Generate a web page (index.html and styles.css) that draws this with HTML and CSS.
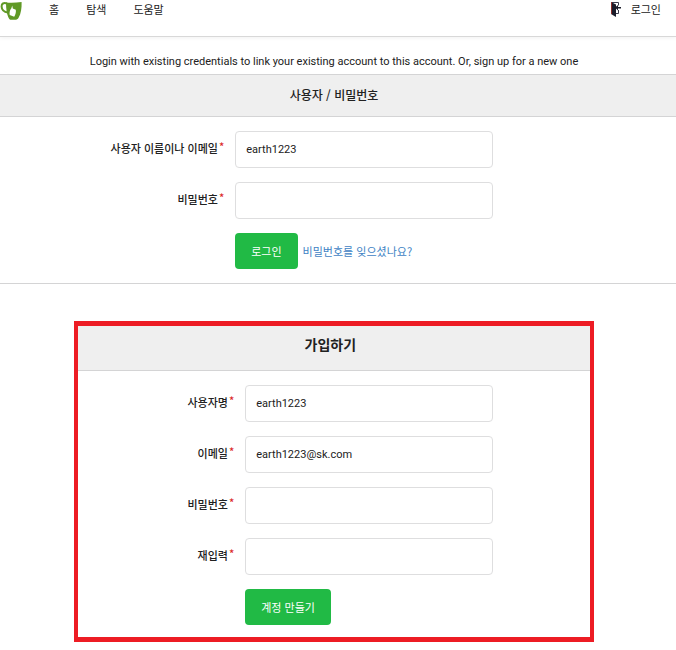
FILE: index.html
```
<!DOCTYPE html>
<html lang="ko">
<head>
    <meta charset="UTF-8">
    <meta name="viewport" content="width=device-width, initial-scale=1.0">
    <title>계정 연결 - Gitea</title>
    <link rel="stylesheet" href="styles.css">
</head>
<body>
    <header class="navbar">
        <nav class="nav-left">
            <a class="logo" href="#" aria-label="Gitea">
                <svg width="22" height="20" viewBox="0 0 22 20">
                    <path d="M7 2.500C3.500 1.500 1.500 2.500 1.600 5.500 1.700 8.800 4 11 8 11.500" fill="none" stroke="#609926" stroke-width="2"/>
                    <path d="M6 1.500C11 2 16 1.800 21.600 1 21.800 7 21 12.600 18.600 16.800 17.800 18.200 16.600 18.800 15 18.800H11.400C9.800 18.800 9 18 8.200 16 6.800 12.800 6 8 6 1.500Z" fill="#609926"/>
                    <path d="M12.200 4.400L12.800 7.400 15.800 8.800C16.200 11 15.600 13.600 14.200 15.800L9.700 14C9.200 11.800 10 8.400 11.400 7.200Z" fill="#fff"/>
                </svg>
            </a>
            <a href="#">홈</a>
            <a href="#">탐색</a>
            <a href="#">도움말</a>
        </nav>
        <a class="sign-in" href="#">
            <svg width="10" height="16" viewBox="0 0 10 16">
                <path d="M1 1.500H7.500V4.500M7.500 9V12.500H5" fill="none" stroke="#3a3b4c"/>
                <path d="M0 1L5 3.500V16L0 13Z" fill="#1b1c2a"/>
                <path d="M0 1H1V13H0Z" fill="#8c2f2a"/>
                <path d="M4 6.500L7 4V6H10V7.500H7V9.500Z" fill="#1b1c2a"/>
            </svg>
            로그인
        </a>
    </header>
    <main>
        <p class="notice">Login with existing credentials to link your existing account to this account. Or, sign up for a new one</p>

        <section class="link-account">
            <h4 class="section-header">사용자 / 비밀번호</h4>
            <form class="form">
                <div class="field">
                    <label for="user_name">사용자 이름이나 이메일</label>
                    <input type="text" id="user_name" value="earth1223" required>
                </div>
                <div class="field">
                    <label for="password">비밀번호</label>
                    <input type="password" id="password" required>
                </div>
                <div class="actions">
                    <button type="submit" class="button">로그인</button>
                    <a href="#">비밀번호를 잊으셨나요?</a>
                </div>
            </form>
        </section>

        <section class="sign-up">
            <h3 class="section-header">가입하기</h3>
            <form class="form">
                <div class="field">
                    <label for="new_user_name">사용자명</label>
                    <input type="text" id="new_user_name" value="earth1223" required>
                </div>
                <div class="field">
                    <label for="email">이메일</label>
                    <input type="email" id="email" value="earth1223@sk.com" required>
                </div>
                <div class="field">
                    <label for="new_password">비밀번호</label>
                    <input type="password" id="new_password" required>
                </div>
                <div class="field">
                    <label for="retype">재입력</label>
                    <input type="password" id="retype" required>
                </div>
                <div class="actions">
                    <button type="submit" class="button">계정 만들기</button>
                </div>
            </form>
        </section>
    </main>
</body>
</html>
```
FILE: styles.css
```
* {
    box-sizing: border-box;
}
body {
    margin: 0;
    background: #fff;
    color: #212121;
    font-family: "Noto Sans CJK KR", sans-serif;
    font-size: 11px;
    line-height: 16px;
}
a {
    color: #4183c4;
    text-decoration: none;
}

/* Top bar */
.navbar {
    display: flex;
    justify-content: space-between;
    align-items: flex-start;
    height: 37px;
    padding: 1px 15px 0 0;
    border-bottom: 1px solid #d8d8d8;
    box-shadow: 0 1px 4px rgba(0, 0, 0, 0.06);
}
.navbar a {
    color: #212121;
}
.nav-left {
    display: flex;
    gap: 27px;
}
.nav-left svg,
.sign-in svg {
    display: block;
}
.sign-in {
    display: flex;
    gap: 10px;
}

.notice {
    margin: 14px 0 0;
    padding: 0 8px 2px 0;
    font-family: Roboto, sans-serif;
    font-size: 11px;
    line-height: 21px;
    text-align: center;
}
.section-header {
    margin: 0;
    padding: 0 8px 2px 0;
    background: #efefef;
    border-bottom: 1px solid #d4d4d5;
    font-size: 12px;
    font-weight: 500;
    line-height: 39px;
    text-align: center;
}

/* Forms */
.form {
    display: flex;
    flex-direction: column;
    gap: 14px;
    padding: 14px 0;
}
.field {
    display: flex;
}
.field label {
    width: var(--label);
    padding: 9px 11px 0 0;
    font-weight: 500;
    text-align: right;
}
.field label::after {
    content: "*";
    margin-left: 1px;
    color: #db2828;
    line-height: 10px;
    vertical-align: 2px;
}
.field input {
    width: var(--input);
    height: 37px;
    padding: 0 10px;
    border: 1px solid #dededf;
    border-radius: 4px;
    background: #fff;
    color: #212121;
    font-family: Roboto, sans-serif;
    font-size: 11px;
}
.actions {
    display: flex;
    align-items: center;
    gap: 5px;
    padding-left: var(--label);
}
.button {
    height: 36px;
    padding: 0 16px;
    border: 0;
    border-radius: 4px;
    background: #21ba45;
    color: #fff;
    font-family: inherit;
    font-size: 11px;
    cursor: pointer;
}

.link-account {
    --label: 34.8%;
    --input: 38.2%;
    border-top: 1px solid #d4d4d5;
    border-bottom: 1px solid #d4d4d5;
}
.sign-up {
    --label: 32.6%;
    --input: 48.4%;
    width: 76.9%;
    margin: 37px 12% 8px 11%;
    border: solid #ed1c24;
    border-width: 5px 4px;
}
.sign-up .section-header {
    padding-bottom: 7px;
    font-size: 14px;
    font-weight: 700;
    line-height: 37px;
}
.sign-up .form {
    padding-bottom: 12px;
}
```
